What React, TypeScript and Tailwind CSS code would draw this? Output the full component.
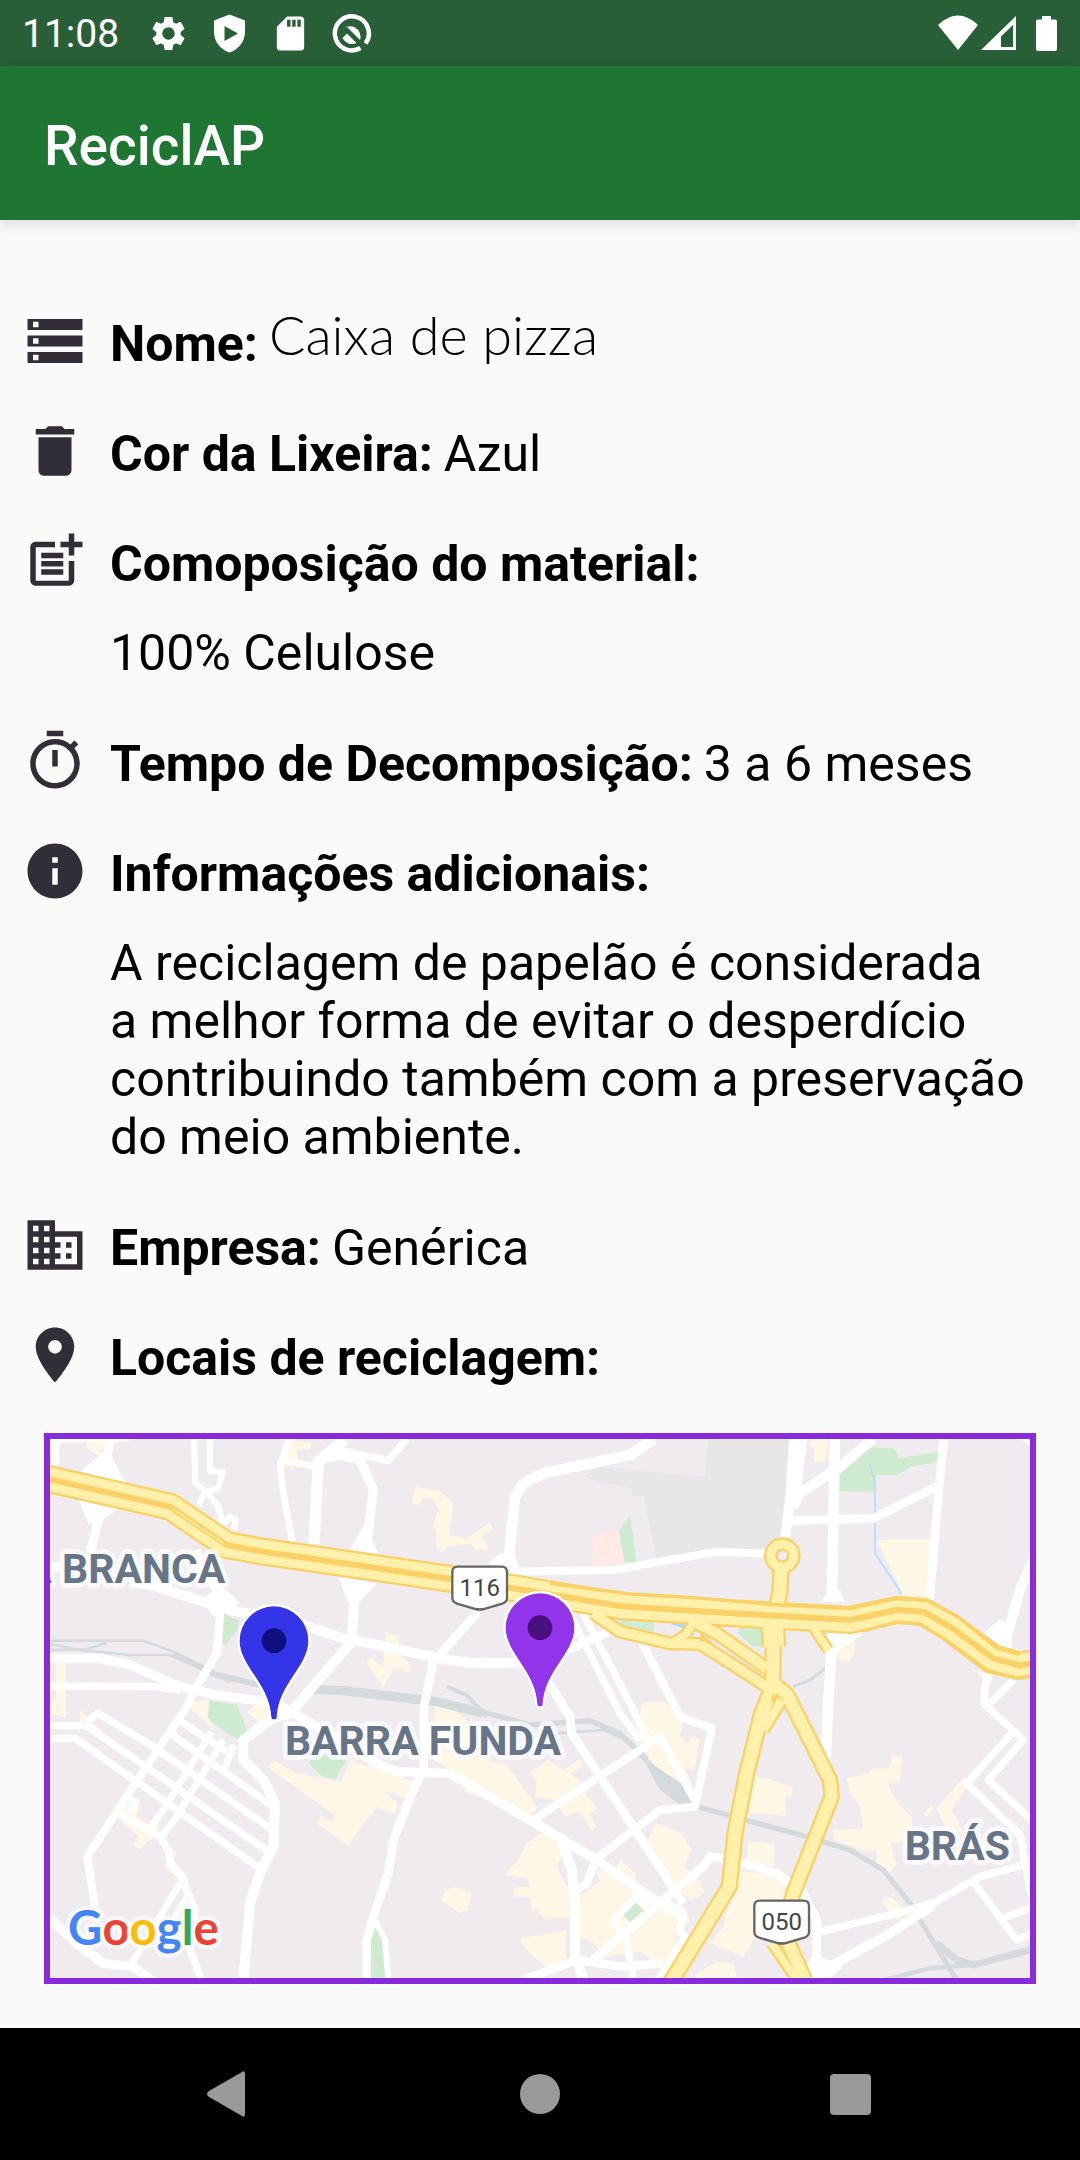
import type { ReactNode } from "react";
import type { IconType } from "react-icons";
import {
  MdBusiness,
  MdDelete,
  MdInfo,
  MdLocationOn,
  MdOutlineTimer,
  MdPostAdd,
  MdSdCard,
  MdSettings,
  MdStorage,
} from "react-icons/md";

function StatusBar() {
  return (
    <div className="flex h-[66px] items-center justify-between bg-[#295f37] pl-[22px] pr-[17px] text-white">
      <div className="flex items-center gap-5">
        <span className="w-[106px] pt-0.5 text-[39px] leading-[46px]">11:08</span>
        <MdSettings className="size-[41px]" />
        <svg viewBox="0 0 41 41" className="size-[41px]" fill="currentColor" aria-hidden="true">
          <path
            fillRule="evenodd"
            d="M20.500 1.500 36 7.500V19C36 28 30 36.500 20.500 39.500 11 36.500 5 28 5 19V7.500ZM15.500 13V28L29 20.500Z"
          />
        </svg>
        <MdSdCard className="size-[41px]" />
        <svg viewBox="0 0 41 41" className="size-[41px]" fill="none" aria-hidden="true">
          <path d="M29.500 35A17 17 0 1 1 34.500 30.500" stroke="currentColor" strokeWidth="4.500" />
          <path d="M11 17A10.500 10.500 0 0 1 29 27L15.500 13.500Z" fill="currentColor" />
          <path d="M11.500 25 16 20.500 25.500 30A10.500 10.500 0 0 1 11.500 25Z" fill="currentColor" />
          <path d="M28 29 34.500 35.500" stroke="#295f37" strokeWidth="3" />
        </svg>
      </div>
      <svg viewBox="0 0 126 40" className="h-10 w-[126px]" fill="currentColor" aria-hidden="true">
        <path d="M1 12Q21-7 41 12L21 37Z" />
        <path fillRule="evenodd" d="M79 3V37H44ZM76 12 64 23.500V34H76Z" />
        <path d="M105 3H114V6.500H118Q120 6.500 120 8.500V36Q120 38 118 38H101Q99 38 99 36V8.500Q99 6.500 101 6.500H105Z" />
      </svg>
    </div>
  );
}

function InfoRow({
  icon: Icon,
  label,
  value,
  children,
}: {
  icon: IconType;
  label: string;
  value?: ReactNode;
  children?: ReactNode;
}) {
  return (
    <div className="flex items-start gap-[22px]">
      <Icon className="size-[66px] shrink-0 text-[#322e37]" aria-hidden="true" />
      <div className={children ? "pt-[7px] pb-0.5" : "h-[66px] pt-[7px]"}>
        <dt className="inline font-bold">{label}</dt>
        {value && <dd className="ml-[11px] inline">{value}</dd>}
        {children && <dd className="mt-[31px]">{children}</dd>}
      </div>
    </div>
  );
}

const CREAM = [
  "M170 65 235 62 220 85 205 108 172 85Z",
  "M780 60 845 68 842 88 800 90 803 125 785 145 740 125Z",
  "M1155 200 1225 212 1270 245 1258 345 1310 355 1380 308 1390 328 1355 350 1378 388 1340 390 1325 372 1250 380 1240 395 1220 390 1218 330 1210 320 1225 265 1205 235 1178 232 1172 255 1145 250Z",
  "M1068 638 1108 650 1105 700 1145 740 1135 757 1090 742 1060 805 1008 725 1025 715 1060 740Z",
  "M75 705H108V893L60 880V855L78 835Z",
  "M150 870 175 895 220 935 205 950 150 915Z",
  "M480 848 535 840V895L555 930 485 870Z",
  "M650 875 680 852 720 862 715 895 690 910Z",
  "M285 1140 330 1160 320 1190 360 1215 390 1200 375 1250 345 1270 330 1290 308 1275 325 1250 260 1190Z",
  "M415 1290 438 1295 430 1325 470 1365 492 1450 470 1440 440 1370 405 1345Z",
  "M735 1023 800 1060 900 1080 935 1085 960 1020 1010 1040 1030 1030 1150 1085 1130 1140 1090 1120 1062 1115 1102 1150 1095 1180 1040 1160 1010 1200 955 1278 860 1210 875 1188 902 1205 917 1188 710 1040Z",
  "M1215 855 1260 860 1310 900 1340 960 1335 1010 1430 1035 1525 1165 1500 1185 1390 1130 1370 1100 1350 1130 1300 1115 1315 1090 1250 1040 1210 1020Z",
  "M1500 1055 1555 1020 1600 1050 1650 1018 1662 1035 1622 1060 1680 1105 1665 1125 1705 1165 1680 1180 1700 1220 1685 1232 1648 1175 1610 1188 1570 1140 1515 1130 1520 1085Z",
  "M1835 850 1900 843 1962 900 1950 945 1970 970 1985 950 2008 955 1995 1050 1965 1045 1985 1090 1960 1100 1880 1050 1820 950Z",
  "M1530 1240 1570 1235 1600 1300 1580 1340 1620 1420V1490L1550 1498 1505 1470 1500 1430 1450 1430V1402L1500 1400 1490 1375 1425 1365 1470 1310 1490 1270Z",
  "M1245 1410 1275 1402 1325 1415 1312 1470 1290 1480 1235 1440Z",
  "M1465 1555 1560 1540 1608 1530V1620L1560 1650 1500 1600Z",
  "M1660 1420 1710 1385 1700 1350 1760 1345 1770 1318 1820 1365 1810 1390 1860 1420 1960 1460 1980 1500 1940 1560 1930 1600 1890 1640 1830 1595 1730 1610 1690 1570 1640 1545V1430Z",
  "M1875 1210 1920 1225 1955 1240 1985 1290 1965 1340 2005 1380 2025 1420 1980 1440 1940 1400 1840 1290Z",
  "M2150 1075 2190 1070 2288 1100 2285 1125 2265 1130 2268 1188 2160 1178Z",
  "M2155 1265 2190 1265 2235 1275 2233 1340 2150 1325Z",
  "M2110 1350 2230 1365 2280 1380 2250 1460 2170 1560 2140 1610 2040 1570 2080 1520 2100 1430Z",
  "M2000 1660 2060 1625 2110 1630 2120 1674H2000Z",
  "M2450 1075 2515 1060 2530 1045 2580 1045 2585 1005 2620 1012 2610 1085 2575 1090 2590 1130 2615 1160 2645 1190V1260L2580 1270 2600 1330 2578 1360 2540 1330V1295L2500 1290 2410 1260V1230L2500 1225 2490 1160 2460 1120Z",
  "M2800 1072 2825 1080 2765 1170 2800 1240 2750 1230 2720 1165Z",
  "M2680 1178 2705 1155 2712 1165 2690 1190Z",
  "M2565 1430 2580 1430 2640 1480 2600 1500 2555 1445Z",
  "M2430 640 2475 635V700L2455 725 2415 715Z",
  "M2335 75 2350 57H2396L2384 125H2352V85Z",
  "M2541 362 2580 358H2702L2690 550 2620 525Z",
];

const GREEN = [
  "M2428 213V165L2520 82 2595 86 2605 115 2725 97V125L2645 140 2600 165H2540L2533 215Z",
  "M1767 332 1800 288 1820 425 1785 430Z",
  "M1755 595 1872 605 1870 637H1780Z",
  "M2130 610 2180 615 2210 640 2205 680 2165 678 2125 640Z",
  "M582 582 625 600 622 630 587 675 578 668Z",
  "M335 390 370 395 400 440 395 470 365 460Z",
  "M540 842 620 855 655 940 632 960 590 940 533 895Z",
  "M835 1030 860 1000 950 1020 915 1080 870 1065Z",
  "M1780 1485 1815 1447 1842 1470 1800 1507Z",
  "M1033 1497 1062 1570 1065 1674H1020L1018 1570Z",
];

const RAILS: [string, number][] = [
  ["M60 662H340L430 695 560 768", 8],
  ["M60 690 170 688 230 668 M60 672 150 690 300 705 420 705 600 785", 8],
  ["M430 700 560 765 690 795", 18],
  ["M850 808 940 812 1220 845 1360 880", 28],
  ["M1250 800 1310 825 1370 890", 12],
  ["M1340 870 1500 915 1680 902 1770 940 1850 1020", 16],
  ["M1580 940 1720 930 1790 960", 8],
  ["M2000 1160 2330 1250 2460 1290 2560 1350 2640 1450 2780 1680", 16],
  ["M2560 1680 2700 1645 2820 1635", 14],
  ["M2720 1570 2780 1620 2830 1635 3000 1590", 22],
  ["M2400 735 2340 780 2290 800", 10],
];

const STREETS: [string, number][] = [
  ["M78 57 75 135", 22],
  ["M240 57 232 110 265 178 M232 110 170 152", 26],
  ["M60 62 300 58", 12],
  ["M492 57 496 190 528 212 505 255 M540 57 540 152 578 157 565 205 530 215 565 260 578 312 600 290 617 300 612 330", 18],
  ["M778 57 752 130 755 190 787 365 M750 118 862 142", 20],
  ["M945 57 865 125 852 372", 34],
  ["M870 118 930 105 990 120 1030 210 1010 370", 28],
  ["M930 90 1075 122 1130 57", 22],
  ["M60 440H90 M300 485 380 500 520 545 600 570 800 610 940 655 1020 670 1230 715 1330 730 1460 728", 30],
  ["M1460 728 1600 695 1760 625", 26],
  ["M500 390 510 430 565 520 572 560 560 700 500 800 470 860 270 1160 172 1310 195 1460", 24],
  ["M205 300 180 400", 26],
  ["M975 480 972 560 965 660", 30],
  ["M965 665 780 880 720 900 640 960 640 1020 700 1080 735 1150 730 1280 690 1360 660 1450 640 1680", 30],
  ["M60 715H210L300 735 450 800 560 825 740 850 860 920 1050 1035 1100 1055 1260 1060 1500 1200 1700 1320 1880 1445 1960 1485", 28],
  ["M60 798 370 800 450 810", 22],
  ["M60 917H170L715 1295 M170 905 205 880 370 980 725 1228 M60 955H135L690 1345 M420 940 730 1160 M445 900 590 995", 22],
  ["M545 935 400 1170 355 1230 M580 960 440 1190 395 1250 M612 975 580 1055", 20],
  ["M255 1175 390 1250 415 1290 420 1325 455 1370 495 1470 480 1590 515 1680", 22],
  ["M280 1135 318 1145 300 1180 M450 1390 300 1640 M470 1430 430 1500", 20],
  ["M60 1495 140 1570 220 1630 310 1640 370 1685", 28],
  ["M1220 715 1345 575", 26],
  ["M1212 715 1182 860V1050L1150 1110 1090 1260 1075 1360 1030 1490 1010 1560V1680", 26],
  ["M1030 1490 1065 1560 1075 1680", 18],
  ["M1870 57 1800 105 1540 160 1480 190 1455 230 1435 430", 32],
  ["M1440 455 1750 450 2060 395 2230 402", 24],
  ["M1615 575 1770 880 1830 960 M1660 580 1810 870 1850 955", 22],
  ["M1835 665 1950 890 2045 925 1995 1160 1890 1170 1700 1315 1670 1390 1640 1410", 24],
  ["M1550 780 1620 890 1625 940 1960 1450", 26],
  ["M1510 1200 1890 950 2000 1150", 24],
  ["M1590 1250 1625 1350 1635 1450 1635 1600 1660 1680", 30],
  ["M1480 1680 1640 1620 1780 1640 1900 1630", 26],
  ["M1690 1620 1900 1440 2020 1340 2040 1310 2100 1318 2240 1360 2320 1420 2360 1500V1650", 26],
  ["M1830 1420 1750 1500 1790 1560 1810 1680 M1820 1430 1850 1460 M1900 1440 1960 1480 1950 1530 1965 1550 1885 1680", 22],
  ["M2292 57 2280 240 2264 370 M2316 57 2295 240", 30],
  ["M2530 57 2430 140 2310 220 2290 260", 30],
  ["M2414 57 2406 540", 32],
  ["M2280 302 2530 295 2720 200", 26],
  ["M2742 57 2728 190 2698 550", 26],
  ["M2960 40 3010 70", 20],
  ["M3010 420 2970 510 2930 650", 30],
  ["M2408 640 2395 840 2385 1070", 32],
  ["M2490 635 2410 690", 20],
  ["M2868 765 2862 850 2980 960 2875 1080 3010 1205 M2945 940 2810 1090 2970 1245 3005 1430 M2950 780 2880 850", 22],
  ["M3010 1328 2850 1370 2700 1455 M2720 1445 2600 1480 2370 1535 M2830 1385 2960 1560 3010 1540 M2920 1495 3010 1460", 22],
  ["M2710 1455 2580 1540 2360 1660", 28],
];

const HIGHWAYS: [string, number][] = [
  ["M1690 580 1770 635 1920 670 2010 672 2110 735 2210 800", 28],
  ["M1995 600 1970 640 1930 668", 22],
  ["M2000 610 2060 640 2210 745", 30],
  ["M2345 615 2395 690", 22],
  ["M2254 420 2250 510 2235 600 2230 640 2228 800 2195 880 2150 1060 2115 1240 2098 1400 1920 1690", 38],
  ["M2220 780 2272 825 2400 1080 2405 1130 2290 1420 2262 1540 2325 1680", 36],
  ["M2255 840 2200 930", 26],
  ["M2225 1570 2300 1680", 22],
  ["M2228 600 2232 680", 60],
  ["M40 174 60 178 420 260 590 375 700 395 1080 450 1440 503 1770 558 1980 572 2250 588 2460 600 2600 570 2680 575 2760 620 2890 715 2970 737 3020 727", 70],
];

function MapPin({ x, y, fill, dot }: { x: number; y: number; fill: string; dot: string }) {
  return (
    <g transform={`translate(${x} ${y})`}>
      <path
        d="M-103 0A103 103 0 0 1 103 0C103 76 14 128 8 228A8 8 0 0 1-8 228C-14 128-103 76-103 0Z"
        fill={fill}
        stroke="#fff"
        strokeWidth="14"
        paintOrder="stroke"
      />
      <circle r="37" fill={dot} />
    </g>
  );
}

function RouteShield({ x, y, label }: { x: number; y: number; label: string }) {
  return (
    <g transform={`translate(${x} ${y})`}>
      <path
        d="M-66-62H66Q82-62 82-46V32Q82 44 68 49L12 65Q0 68-12 65L-68 49Q-82 44-82 32V-46Q-82-62-66-62Z"
        fill="#fff"
        stroke="#666"
        strokeWidth="7"
      />
      <text y="26" textAnchor="middle" fontSize="72" fill="#444">
        {label}
      </text>
    </g>
  );
}

function RecyclingMap() {
  return (
    <div className="border-6 border-[#882bdb]">
      <svg
        viewBox="60 57 2940 1617"
        className="block h-auto w-full bg-[#efebef]"
        role="img"
        aria-label="Mapa dos locais de reciclagem"
      >
        <path
          d="M1660 170 1710 142 1840 153 2025 170 2034 57H2290L2250 390 1878 415 1842 230 1808 228 1805 205 1720 190Z"
          fill="#e7e7e7"
        />
        {CREAM.map((d) => (
          <path key={d} d={d} fill="#fff7e6" />
        ))}
        {GREEN.map((d) => (
          <path key={d} d={d} fill="#ceebcf" />
        ))}
        <path d="M1685 345 1765 332 1783 430 1693 440ZM1508 1468H1528V1492H1508Z" fill="#ffeae6" />
        <path d="M1925 605 1985 625" stroke="#aadaff" strokeWidth="16" />
        <g fill="none" stroke="#d5dbdd" strokeLinejoin="round">
          {RAILS.map(([d, w]) => (
            <path key={d} d={d} strokeWidth={w} />
          ))}
        </g>
        <path d="M1830 1000 1880 1040 1960 1095 2000 1165 1950 1155 1890 1110Z" fill="#d5dbdd" />
        <path d="M2518 132 2535 185V400L2611 515V525" fill="none" stroke="#b5dcfa" strokeWidth="5" />
        <g fill="none" stroke="#fff" strokeLinejoin="round">
          {STREETS.map(([d, w]) => (
            <path key={d} d={d} strokeWidth={w} />
          ))}
        </g>
        <path
          d="M145 235 270 262 205 310 175 310ZM225 90 290 190 155 155ZM1005 310 1045 402 960 390ZM925 470 1040 490 985 550 955 550ZM1375 430 1410 400 1455 400 1470 460ZM520 540 570 490 630 550 550 590ZM2370 545 2400 510H2430L2445 545ZM2840 655 2910 600 2945 610 2945 690ZM2395 630H2480L2400 720ZM2310 1674 2350 1600 2440 1640 2400 1674ZM2840 755H2890L2880 790Z"
          fill="#fff"
        />
        <g fill="none" strokeLinejoin="round">
          <circle cx="2257" cy="407" r="34" stroke="#fad166" strokeWidth="42" />
          {HIGHWAYS.map(([d, w]) => (
            <path key={d} d={d} strokeWidth={w + 14} stroke="#fad166" />
          ))}
          <circle cx="2257" cy="407" r="34" stroke="#fff1ac" strokeWidth="28" />
          {HIGHWAYS.map(([d, w]) => (
            <path key={d} d={d} strokeWidth={w} stroke="#fff1ac" />
          ))}
          <circle cx="2257" cy="407" r="18" fill="#efebef" stroke="#fad166" strokeWidth="7" />
          <path
            d="M60 178 420 260 590 375 700 395 1080 450 1440 503 1770 558 1980 572 2250 588 2460 600 2600 570 2680 575 2760 620 2890 715 2970 737 3020 727"
            stroke="#fad166"
            strokeWidth="18"
          />
          <path
            d="M1560 490 1800 522 1980 532 2250 555 2460 566 2600 536 2690 541 2780 588 2900 684 2970 704 M2500 633 2600 606 2670 612 2740 656 2870 754 2960 774 3020 766"
            stroke="#fad166"
            strokeWidth="10"
          />
          <path d="M430 268 580 370" stroke="#fff1ac" strokeWidth="4" />
        </g>
        <path d="M2012 640 2050 668 2010 662ZM2228 820 2242 830 2222 850Z" fill="#fad166" />

        <g
          fontWeight="700"
          fontSize="123"
          fill="#667587"
          stroke="#fff"
          strokeOpacity="0.7"
          strokeWidth="28"
          strokeLinejoin="round"
          paintOrder="stroke"
        >
          <text x="586" y="488" textAnchor="end">
            A BRANCA
          </text>
          <text x="1179" y="1006" textAnchor="middle">
            BARRA FUNDA
          </text>
          <text x="2782" y="1321" textAnchor="middle">
            BRÁS
          </text>
        </g>
        <RouteShield x={1349} y={502} label="116" />
        <RouteShield x={2255} y={1504} label="050" />
        <MapPin x={732} y={662} fill="#3434e8" dot="#0f0f80" />
        <MapPin x={1530} y={623} fill="#9234e9" dot="#49107f" />
        <text
          x="114"
          y="1576"
          fontFamily="Lato, sans-serif"
          fontSize="142"
          fontWeight="700"
          stroke="#fff"
          strokeOpacity="0.6"
          strokeWidth="26"
          strokeLinejoin="round"
          paintOrder="stroke"
        >
          <tspan fill="#4285f4">G</tspan>
          <tspan fill="#ea4335">o</tspan>
          <tspan fill="#fbbc05">o</tspan>
          <tspan fill="#4285f4">g</tspan>
          <tspan fill="#34a853">l</tspan>
          <tspan fill="#ea4335">e</tspan>
        </text>
      </svg>
    </div>
  );
}

function NavButton({ label, children }: { label: string; children: ReactNode }) {
  return (
    <button type="button" aria-label={label} className="flex h-[132px] w-[131px] items-center justify-center">
      <svg viewBox="0 0 48 48" className="size-12" fill="#999" aria-hidden="true">
        {children}
      </svg>
    </button>
  );
}

export default function App() {
  return (
    <div className="flex min-h-screen flex-col bg-[#fafafa] font-['Roboto',sans-serif] text-black">
      <StatusBar />
      <header className="flex h-[154px] items-center bg-[#1f7532] px-11 pt-1.5 shadow-[0_3px_14px_rgba(0,0,0,0.14)]">
        <h1 className="text-[55px] leading-[64px] font-medium text-white">ReciclAP</h1>
      </header>

      <main className="grow pt-22 pb-11">
        <dl className="flex flex-col gap-11 px-[22px] text-[50px] leading-[58px]">
          <InfoRow
            icon={MdStorage}
            label="Nome:"
            value={
              <span className="align-[6px] font-['Lato',sans-serif] text-[54px] leading-[30px] font-light">
                Caixa de pizza
              </span>
            }
          />
          <InfoRow icon={MdDelete} label="Cor da Lixeira:" value="Azul" />
          <InfoRow icon={MdPostAdd} label="Comoposição do material:">
            100% Celulose
          </InfoRow>
          <InfoRow icon={MdOutlineTimer} label="Tempo de Decomposição:" value="3 a 6 meses" />
          <InfoRow icon={MdInfo} label="Informações adicionais:">
            A reciclagem de papelão é considerada
            <br />a melhor forma de evitar o desperdício
            <br />
            contribuindo também com a preservação
            <br />
            do meio ambiente.
          </InfoRow>
          <InfoRow icon={MdBusiness} label="Empresa:" value="Genérica" />
          <InfoRow icon={MdLocationOn} label="Locais de reciclagem:" />
        </dl>
        <div className="mx-11 mt-[45px]">
          <RecyclingMap />
        </div>
      </main>

      <nav className="flex h-[132px] items-center justify-center gap-[180px] bg-black">
        <NavButton label="Voltar">
          <path d="M37 2Q40 0 40 4V44Q40 48 37 46L4 27Q0 24 4 21Z" />
        </NavButton>
        <NavButton label="Início">
          <circle cx="24" cy="24" r="20" />
        </NavButton>
        <NavButton label="Recentes">
          <rect x="3" y="4" width="41" height="41" rx="4" />
        </NavButton>
      </nav>
    </div>
  );
}
